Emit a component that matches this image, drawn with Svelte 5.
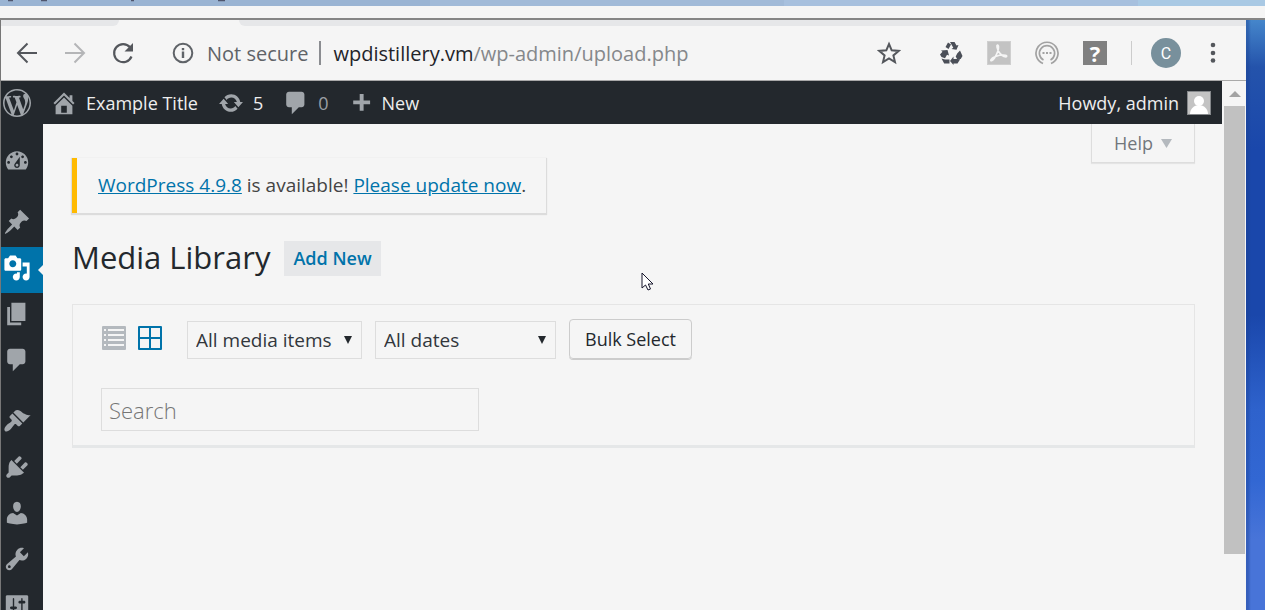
<script>
  const adminBar = {
    wordpress: 'M20 10c0-5.51-4.49-10-10-10C4.48 0 0 4.49 0 10c0 5.52 4.48 10 10 10 5.51 0 10-4.48 10-10zM7.78 15.37L4.37 6.22c.55-.02 1.17-.08 1.17-.08.5-.06.44-1.13-.06-1.11 0 0-1.45.11-2.37.11-.18 0-.37 0-.58-.01C4.12 2.69 6.87 1.11 10 1.11c2.33 0 4.45.87 6.05 2.34-.68-.11-1.65.39-1.65 1.58 0 .74.45 1.36.9 2.1.35.61.55 1.36.55 2.46 0 1.49-1.4 5-1.4 5l-3.03-8.37c.54-.02.82-.17.82-.17.5-.05.44-1.25-.06-1.22 0 0-1.44.12-2.38.12-.87 0-2.33-.12-2.33-.12-.5-.03-.56 1.2-.06 1.22l.92.08 1.26 3.41zM17.41 10c.24-.64.74-1.87.43-4.25.7 1.29 1.05 2.71 1.05 4.25 0 3.29-1.73 6.24-4.4 7.78.97-2.59 1.94-5.2 2.92-7.78zM6.1 18.09C3.12 16.65 1.11 13.53 1.11 10c0-1.3.23-2.48.72-3.59C3.25 10.3 4.67 14.2 6.1 18.09zm4.03-6.63l2.58 6.98c-.86.29-1.76.45-2.71.45-.79 0-1.57-.11-2.29-.33.81-2.38 1.62-4.74 2.42-7.1z',
    home: 'M16 8.5l1.53 1.53-1.06 1.06L10 4.6l-6.47 6.49-1.06-1.06L10 2.5l4 4v-2h2v4zm-6-2.46l6 5.99V18H4v-5.97zM12 17v-5H8v5h4z',
    update: 'M10.2 3.28c3.53 0 6.43 2.61 6.92 6h2.08l-3.5 4-3.5-4h2.32c-.45-1.97-2.21-3.45-4.32-3.45-1.45 0-2.73.71-3.54 1.78L4.95 5.66C6.23 4.2 8.11 3.28 10.2 3.28zm-.4 13.44c-3.52 0-6.43-2.61-6.92-6H.8l3.5-4c1.17 1.33 2.33 2.67 3.5 4H5.48c.45 1.97 2.21 3.45 4.32 3.45 1.45 0 2.73-.71 3.54-1.78l1.71 1.95c-1.28 1.46-3.15 2.38-5.25 2.38z',
    comment: 'M5 2h9c1.1 0 2 .9 2 2v7c0 1.1-.9 2-2 2h-2l-5 5v-5H5c-1.1 0-2-.9-2-2V4c0-1.1.9-2 2-2z',
    plus: 'M17 8v3h-5v5H9v-5H4V8h5V3h3v5h5z',
  };

  const menuGroups = [
    [
      { name: 'Dashboard', d: 'M3.76 16h12.48c1.1-1.37 1.76-3.11 1.76-5 0-4.42-3.58-8-8-8s-8 3.58-8 8c0 1.89.66 3.63 1.76 5zM10 4c.55 0 1 .45 1 1s-.45 1-1 1-1-.45-1-1 .45-1 1-1zM6 6c.55 0 1 .45 1 1s-.45 1-1 1-1-.45-1-1 .45-1 1-1zm8 0c.55 0 1 .45 1 1s-.45 1-1 1-1-.45-1-1 .45-1 1-1zm-5.37 5.55L12 7v6c0 1.1-.9 2-2 2s-2-.9-2-2c0-.57.24-1.08.63-1.45zM4 10c.55 0 1 .45 1 1s-.45 1-1 1-1-.45-1-1 .45-1 1-1zm12 0c.55 0 1 .45 1 1s-.45 1-1 1-1-.45-1-1 .45-1 1-1zm-5 3c0-.55-.45-1-1-1s-1 .45-1 1 .45 1 1 1 1-.45 1-1z' },
    ],
    [
      { name: 'Posts', d: 'M10.44 3.02l1.82-1.82 6.36 6.35-1.83 1.82c-1.05-.68-2.48-.57-3.41.36l-.75.75c-.92.93-1.04 2.35-.35 3.41l-1.83 1.82-2.41-2.41-2.8 2.79c-.42.42-3.38 2.71-3.8 2.29s1.86-3.39 2.28-3.81l2.79-2.79L4.1 9.36l1.83-1.82c1.05.69 2.48.57 3.4-.36l.75-.75c.93-.92 1.05-2.35.36-3.41z' },
      { name: 'Media', current: true, d: 'M13 11V4c0-.55-.45-1-1-1h-1.67L9 1H5L3.67 3H2c-.55 0-1 .45-1 1v7c0 .55.45 1 1 1h10c.55 0 1-.45 1-1zM7 4.5c1.38 0 2.5 1.12 2.5 2.5S8.38 9.5 7 9.5 4.5 8.38 4.5 7 5.62 4.5 7 4.5zM14 6h5v10.5c0 1.38-1.12 2.5-2.5 2.5S14 17.88 14 16.5s1.12-2.5 2.5-2.5c.17 0 .34.02.5.05V9h-3V6zm-4 8.05V13h2v3.5c0 1.38-1.12 2.5-2.5 2.5S7 17.88 7 16.5 8.12 14 9.5 14c.17 0 .34.02.5.05z' },
      { name: 'Pages', d: 'M6 15V2h10v13H6zm-1 1h8v2H3V5h2v11z' },
      { name: 'Comments', d: 'M5 2h9c1.1 0 2 .9 2 2v7c0 1.1-.9 2-2 2h-2l-5 5v-5H5c-1.1 0-2-.9-2-2V4c0-1.1.9-2 2-2z' },
    ],
    [
      { name: 'Appearance', d: 'M14.48 11.06L7.41 3.99l1.5-1.5c.5-.56 2.3-.47 3.51.32 1.21.8 1.43 1.28 2.91 2.1 1.18.64 2.45 1.26 4.45.85zm-.71.71L6.7 4.7 4.93 6.47c-.39.39-.39 1.02 0 1.41l1.06 1.06c.39.39.39 1.03 0 1.42-.6.6-1.43 1.11-2.21 1.69-.35.26-.7.53-1.01.84C1.43 14.23.4 16.08 1.4 17.07c.99 1 2.84-.03 4.18-1.36.31-.31.58-.66.85-1.02.57-.78 1.08-1.61 1.69-2.21.39-.39 1.02-.39 1.41 0l1.06 1.06c.39.39 1.02.39 1.41 0z' },
      { name: 'Plugins', d: 'M13.11 4.36L9.87 7.6 8 5.73l3.24-3.24c.35-.34 1.05-.2 1.56.32.52.51.66 1.21.31 1.55zm-8 1.77l.91-1.12 9.01 9.01-1.19.84c-.71.71-2.63 1.16-3.82 1.16H6.14L4.9 17.26c-.59.59-1.54.59-2.12 0-.59-.58-.59-1.53 0-2.12l1.24-1.24v-3.88c0-1.13.4-3.19 1.09-3.89zm7.26 3.97l3.24-3.24c.34-.35 1.04-.21 1.55.31.52.51.66 1.21.31 1.55l-3.24 3.25z' },
      { name: 'Users', d: 'M10 9.25c-2.27 0-2.73-3.44-2.73-3.44C7 4.02 7.82 2 9.97 2c2.16 0 2.98 2.02 2.71 3.81 0 0-.41 3.44-2.68 3.44zm0 2.57L12.72 10c2.39 0 4.52 2.33 4.52 4.53v2.49s-3.65 1.13-7.24 1.13c-3.65 0-7.24-1.13-7.24-1.13v-2.49c0-2.25 1.94-4.48 4.47-4.48z' },
      { name: 'Tools', d: 'M16.68 9.77c-1.34 1.34-3.3 1.67-4.95.99l-5.41 6.52c-.99.99-2.59.99-3.58 0s-.99-2.59 0-3.57l6.52-5.42c-.68-1.65-.35-3.61.99-4.95 1.28-1.28 3.12-1.62 4.72-1.06l-2.89 2.89 2.82 2.82 2.86-2.87c.53 1.58.18 3.39-1.08 4.65zM3.81 16.21c.4.39 1.04.39 1.43 0 .4-.4.4-1.04 0-1.43-.39-.4-1.03-.4-1.43 0-.39.39-.39 1.03 0 1.43z' },
      { name: 'Settings', d: 'M18 16V4c0-.55-.45-1-1-1H3c-.55 0-1 .45-1 1v12c0 .55.45 1 1 1h14c.55 0 1-.45 1-1zM8 11h1c.55 0 1 .45 1 1s-.45 1-1 1H8v1.5c0 .28-.22.5-.5.5s-.5-.22-.5-.5V13H6c-.55 0-1-.45-1-1s.45-1 1-1h1V5.5c0-.28.22-.5.5-.5s.5.22.5.5V11zm5-2h-1c-.55 0-1-.45-1-1s.45-1 1-1h1V5.5c0-.28.22-.5.5-.5s.5.22.5.5V7h1c.55 0 1 .45 1 1s-.45 1-1 1h-1v5.5c0 .28-.22.5-.5.5s-.5-.22-.5-.5V9z' },
    ],
  ];

  let search = $state('');
</script>

{#snippet glyph(d, size)}
  <svg class="glyph" width={size} height={size} viewBox="0 0 20 20" aria-hidden="true"><path fill-rule="evenodd" {d} /></svg>
{/snippet}

<div class="screen">
  <div class="backdrop">
    <svg width="230" height="2" viewBox="0 0 230 2" fill="none" stroke="#3c3f55cc" stroke-width="1.500"><path d="M8 .5h5M41 .5h6M131 .5h3M218 .5h7" /></svg>
  </div>
  <div class="row">
    <div class="window">
      <div class="tabs"><i></i><b></b><i></i></div>
      <div class="toolbar">
        <button aria-label="Back">
          <svg width="24" height="24" viewBox="0 0 24 24" fill="none" stroke="#54575c" stroke-width="2"><path d="M22 12H3.500M12.500 2.500L3 12l9.500 9.500" /></svg>
        </button>
        <button aria-label="Forward">
          <svg width="24" height="24" viewBox="0 0 24 24" fill="none" stroke="#b4b5b7" stroke-width="2"><path d="M2 12h18.500M11.500 2.500L21 12l-9.500 9.500" /></svg>
        </button>
        <button aria-label="Reload">
          <svg width="24" height="24" viewBox="0 0 24 24"><path d="M20.500 15.500A9 9 0 1 1 19 6.300" fill="none" stroke="#54575c" stroke-width="2.200" /><path d="M22 2v8.500h-8.500z" fill="#54575c" /></svg>
        </button>
        <div class="address">
          <svg width="24" height="24" viewBox="0 0 24 24" fill="none" stroke="#5f6368"><circle cx="12" cy="12" r="9.300" stroke-width="2" /><path d="M12 10.500V17M12 7v2.200" stroke-width="2.400" /></svg>
          <span class="insecure">Not secure</span>
          <span class="bar"></span>
          <span class="url"><b>wpdistillery.vm</b>/wp-admin/upload.php</span>
        </div>
        <div class="extensions">
          <button class="star" aria-label="Bookmark">
            <svg width="24" height="24" viewBox="0 0 24 24"><path d="M12 3l2.700 6.300 6.900.6-5.200 4.500 1.600 6.700-6-3.600-6 3.600 1.600-6.700-5.200-4.500 6.900-.6z" fill="none" stroke="#54575c" stroke-width="2" /></svg>
          </button>
          <button aria-label="Recycle">
            <svg width="24" height="24" viewBox="0 0 24 24" fill="#4b4f58"><path d="M6.500 6L9 1.500 12 3.500 9.500 8zM11 1h4.500l2 3.500L19.500 4 17.500 8.800 12.500 8l1.800-1.200zM2 9.500l6.500-.5 1.500 5.500-2-.8-2 3.500L2.500 16 1 13.500l2.500-2.800zM2.500 17.500L6 18.500h4.500v4H5.200zM18.200 12.500l2.800-3 2.500 5.500-1.800 3-3.500.2-1.500-2.700zM14.500 15.500V18h6.800l-2.800 4.500h-4v1.500L11 20z" /></svg>
          </button>
          <button aria-label="Acrobat">
            <svg width="24" height="24" viewBox="0 0 24 24"><rect x=".5" y=".5" width="23" height="23" fill="#c3c3c3" stroke="#cfcfcf" /><path d="M4 18.500c-1 2 1.500 1.500 3.500-1.500 2.500-4 4.300-8 4-11.500-.3-2.500-2-1.500-1.500.5.800 4 4 8 7 9.500 3 1.200 3.500-.7 1.500-1.200-3-.6-7 .2-10 1.200-2 .7-4 2-4.500 3z" fill="none" stroke="#f5f5f5" stroke-width="1.600" /></svg>
          </button>
          <button aria-label="Cast">
            <svg width="24" height="24" viewBox="0 0 24 24" fill="none" stroke="#a2a2a2" stroke-width="1.700"><path d="M8 22.500a11 11 0 1 1 8 0" /><path d="M8.500 19a7.600 7.600 0 1 1 7 0" /><path d="M7.500 12h9" stroke-width="2" stroke-dasharray="2 1.500" /></svg>
          </button>
          <button class="help-ext" aria-label="Extension help">?</button>
          <span class="divider"></span>
          <button class="profile" aria-label="Profile">C</button>
          <button class="more" aria-label="Menu">
            <svg width="6" height="22" viewBox="0 0 6 22" fill="#54575c"><circle cx="3" cy="3" r="2.300" /><circle cx="3" cy="11" r="2.300" /><circle cx="3" cy="18.500" r="2.300" /></svg>
          </button>
        </div>
      </div>

      <div class="viewport">
        <div class="site">
          <header>
            <a class="wp" href="#about" aria-label="About WordPress">{@render glyph(adminBar.wordpress, 28)}</a>
            <a class="item home" href="#home">{@render glyph(adminBar.home, 28)}<span>Example Title</span></a>
            <a class="item updates" href="#updates">{@render glyph(adminBar.update, 26)}<span>5</span></a>
            <a class="item comments" href="#comments">{@render glyph(adminBar.comment, 28)}<span>0</span></a>
            <a class="item add" href="#new">{@render glyph(adminBar.plus, 26)}<span>New</span></a>
            <a class="item account" href="#profile"><span>Howdy, admin</span>
              <svg width="24" height="24" viewBox="0 0 24 24"><rect x=".5" y=".5" width="23" height="23" fill="#c3c3c3" stroke="#85888b" /><circle cx="12" cy="10" r="5" fill="#fff" /><path d="M3 23c0-5 4-9 9-9s9 4 9 9z" fill="#fff" /></svg>
            </a>
          </header>
          <div class="body">
            <nav>
              {#each menuGroups as group}
                <ul>
                  {#each group as item}
                    <li class:current={item.current}><a href="#{item.name}" aria-label={item.name}>{@render glyph(item.d, 28)}</a></li>
                  {/each}
                </ul>
              {/each}
            </nav>
            <main>
              <button class="help">Help <svg width="11" height="9" viewBox="0 0 11 9"><path d="M0 0h11L5.500 9z" fill="#b4b9be" /></svg></button>
              <p class="notice"><a href="#version">WordPress 4.9.8</a> is available! <a href="#update">Please update now</a>.</p>
              <div class="title">
                <h1>Media Library</h1>
                <a class="add-new" href="#upload">Add New</a>
              </div>
              <section class="filters">
                <div class="controls">
                  <div class="views">
                    <button aria-label="List view">
                      <svg width="26" height="26" viewBox="0 0 26 26"><rect x="1" y="1" width="24" height="24" rx="1" fill="#b4b9be" /><path d="M3 4h2v2H3zm0 5h2v2H3zm0 5h2v2H3zm0 5h2v2H3zM7 4h16v2H7zm0 5h16v2H7zm0 5h16v2H7zm0 5h16v2H7z" fill="#f5f5f5" /></svg>
                    </button>
                    <button aria-label="Grid view">
                      <svg width="26" height="26" viewBox="0 0 26 26"><path d="M2 1h22a1 1 0 0 1 1 1v22a1 1 0 0 1-1 1H2a1 1 0 0 1-1-1V2a1 1 0 0 1 1-1zm1 2v9h9V3zm11 0v9h9V3zM3 14v9h9v-9zm11 0v9h9v-9z" fill="#0073aa" fill-rule="evenodd" /></svg>
                    </button>
                  </div>
                  <div class="pick media">
                    <select aria-label="Filter by type"><option>All media items</option></select>
                    <svg width="8" height="8" viewBox="0 0 8 8"><path d="M0 0h8L4 8z" fill="#23282d" /></svg>
                  </div>
                  <div class="pick dates">
                    <select aria-label="Filter by date"><option>All dates</option></select>
                    <svg width="8" height="8" viewBox="0 0 8 8"><path d="M0 0h8L4 8z" fill="#23282d" /></svg>
                  </div>
                  <button class="bulk">Bulk Select</button>
                </div>
                <input type="search" placeholder="Search" aria-label="Search media" bind:value={search} />
              </section>
            </main>
          </div>
        </div>
        <div class="scroll">
          <button aria-label="Scroll up"><svg width="12" height="6" viewBox="0 0 12 6"><path d="M0 6l6-6 6 6z" fill="#a3a3a3" /></svg></button>
          <div class="thumb"></div>
        </div>
      </div>
    </div>
    <div class="desktop"></div>
  </div>
  <svg class="pointer" width="13" height="20" viewBox="0 0 13 20"><path d="M1 1v15l3.500-3 2.500 5 2.500-1-2.200-5H12z" fill="#fff" stroke="#15152b" /></svg>
</div>

<style>
  :global(body) { margin: 0; overflow: hidden; }
  .screen, .screen * { box-sizing: border-box; }
  .screen {
    height: 100vh;
    display: flex;
    flex-direction: column;
    overflow: hidden;
    background: #f5f5f5;
    color: #23282d;
    font-family: "Open Sans", sans-serif;
    font-size: 18px;
  }
  button { padding: 0; border: 0; background: none; color: inherit; font: inherit; }
  svg { display: block; flex: none; }
  a { color: #0073aa; }
  .backdrop { flex: none; height: 18px; border-bottom: 12px solid #f5f5f5; background: linear-gradient(90deg, #9ab4d3 34%, #a1bad8 34% 62%, #a7c0de 62% 90%, #a9c9e4 90%); }
  .row { flex: 1; min-height: 0; display: flex; border-top: 2px solid #858585; }
  .window { flex: 1; min-width: 0; display: flex; flex-direction: column; border-left: 1px solid #777; }
  .desktop { flex: none; width: 19px; background: linear-gradient(90deg, #1a3f9066 0 2px, transparent 5px), linear-gradient(#4586cb, #2453ab 8%, #1a47ab 22%, #1a47ab 50%, #2e62cc 66%, #3267d3 78%, #4874d8 88%, #4874d8); }

  .tabs { flex: none; display: flex; height: 6px; }
  .tabs i { background: #e6e7e9; }
  .tabs i:first-child { width: 118px; border-bottom-right-radius: 8px; }
  .tabs b { width: 120px; }
  .tabs i:last-child { flex: 1; border-bottom-left-radius: 8px; }

  .toolbar { flex: none; display: flex; align-items: center; height: 55px; padding: 0 30px 0 14px; gap: 24px; border-bottom: 1px solid #a9a9a9; }
  .address { flex: 1; display: flex; align-items: center; margin-left: 12px; font-size: 20px; color: #5f6368; white-space: nowrap; }
  .insecure { margin-left: 12px; }
  .bar { width: 2px; height: 24px; margin: 0 12px 0 11px; background: #8b8d91; }
  .url { color: #85888b; }
  .url b { font-weight: 400; color: #23242a; }
  .extensions { display: flex; align-items: center; gap: 24px; }
  .star { margin-right: 14px; }
  .help-ext { width: 24px; height: 24px; background: #808080; color: #fff; font-size: 22px; font-weight: 700; line-height: 24px; }
  .divider { width: 1px; height: 24px; background: #ccc; }
  .profile { width: 30px; height: 30px; margin-left: -5px; border-radius: 50%; background: #78909c; color: #fff; font: 16px Roboto, sans-serif; }
  .more { margin-left: 5px; }

  .viewport { flex: 1; min-height: 0; display: flex; }
  .site { flex: 1; min-width: 0; display: flex; flex-direction: column; }
  header { flex: none; display: flex; align-items: center; height: 43px; padding-right: 11px; background: #23282d; }
  header a { color: #eee; text-decoration: none; }
  .glyph { fill: #a0a5aa; }
  .item { display: flex; align-items: center; line-height: 24px; white-space: nowrap; }
  .wp { padding-left: 2px; margin-right: 19px; }
  .home { gap: 8px; margin-right: 20px; }
  .updates { gap: 9px; margin-right: 19px; }
  .comments { gap: 8px; margin-right: 19px; }
  .comments span { color: #9a9fa4; }
  .add { gap: 8px; }
  .account { margin-left: auto; gap: 8px; }

  .body { flex: 1; min-height: 0; display: flex; }
  nav { flex: none; width: 42px; padding-top: 16px; overflow: hidden; background: #23282d; }
  nav ul { margin: 0 0 15px; padding: 0; list-style: none; }
  nav a { display: flex; height: 46px; padding: 7px 0 0 2px; }
  nav li.current { position: relative; background: #0073aa; }
  nav li.current .glyph { fill: #fff; }
  nav li.current::after { content: ""; position: absolute; right: 0; top: 18px; border: 5px solid transparent; border-left: 0; border-right-color: #f5f5f5; }

  main { flex: 1; min-width: 0; display: flex; flex-direction: column; padding: 0 27px 0 29px; }
  .help { align-self: flex-end; display: flex; align-items: center; gap: 8px; height: 39px; padding: 0 22px; border: 1px solid #ddd; border-top: 0; color: #72777c; box-shadow: 0 1px 1px #0001; }
  .notice { align-self: flex-start; margin: -5px 0 0; padding: 13px 20px 14px 21px; border-left: 5px solid #ffba00; box-shadow: 0 1px 1px 1px #0000001a; color: #444; font-size: 19px; line-height: 28px; }
  .title { display: flex; align-items: center; gap: 14px; margin-top: 24px; }
  h1 { margin: 0; padding: 0 0 2px; font-size: 31px; font-weight: 400; line-height: 40px; }
  .add-new { padding: 0 9px; background: #e6e7e9; font-weight: 600; line-height: 35px; text-decoration: none; }
  .filters { margin-top: 25px; padding: 14px 28px; border: 1px solid #e5e5e5; border-bottom: 3px solid #e5e7e8; }
  .controls { display: flex; align-items: flex-end; }
  .views { display: flex; align-self: flex-start; gap: 10px; margin: 6px 24px 0 0; }
  .pick { display: grid; align-items: center; margin-right: 13px; }
  .pick > * { grid-area: 1 / 1; }
  .pick svg { justify-self: end; margin-right: 10px; pointer-events: none; }
  .media { width: 175px; }
  .dates { width: 181px; }
  select { appearance: none; width: 100%; height: 38px; padding: 0 8px; border: 1px solid #ddd; border-radius: 0; background: none; color: #32373c; font: inherit; font-size: 19px; }
  .bulk { height: 40px; padding: 0 15px; border: 1px solid #ccc; border-radius: 4px; box-shadow: 0 1px 0 #ccc; }
  input { display: block; width: 378px; max-width: 100%; height: 43px; margin-top: 29px; padding: 0 7px; border: 1px solid #ddd; background: none; color: #32373c; font: 300 22px "Open Sans", sans-serif; }
  input::placeholder { color: #757575; opacity: 1; }

  .scroll { flex: none; width: 24px; padding: 0 1px 0 2px; display: flex; flex-direction: column; }
  .scroll button { display: flex; align-items: center; justify-content: center; height: 25px; }
  .thumb { height: 84.7%; background: #c1c1c1; }
  .pointer { position: absolute; left: 641px; top: 272px; }
</style>
